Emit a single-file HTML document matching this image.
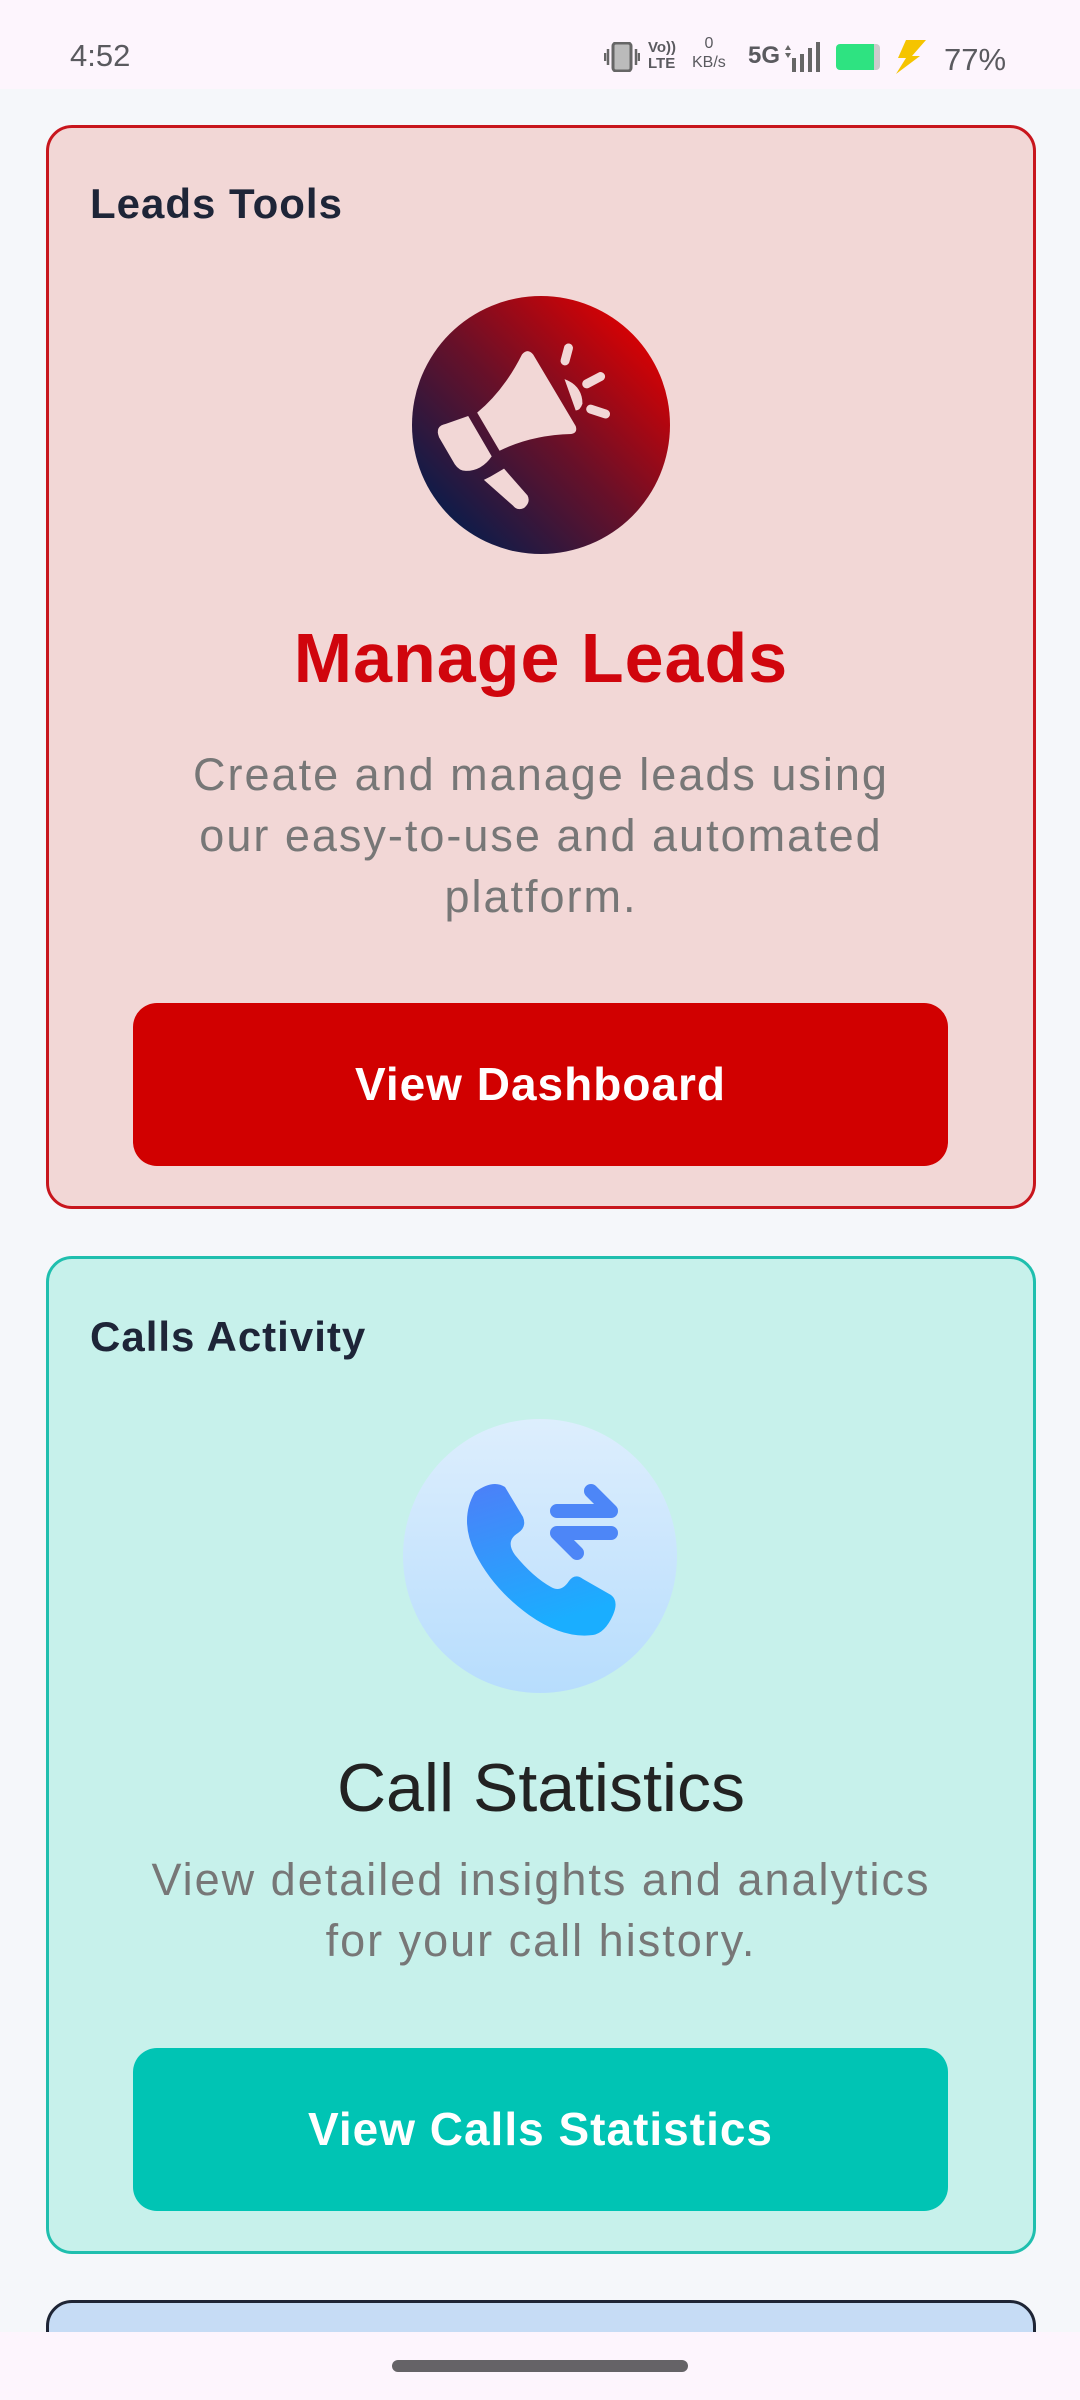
<!DOCTYPE html>
<html><head><meta charset="utf-8"><style>
*{margin:0;padding:0;box-sizing:border-box}
html,body{width:1080px;height:2400px;overflow:hidden}
body{background:#f5f7fa;font-family:"Liberation Sans",sans-serif;position:relative}
.sb{position:absolute;left:0;top:0;width:1080px;height:89px;background:#fdf5fd;color:#5a5a5f}
.card{position:absolute;left:46px;width:990px;border-radius:26px;border:3px solid;overflow:hidden}
.h{position:absolute;left:41px;font-size:42px;letter-spacing:1px;font-weight:bold;color:#1e2538}
.t{position:absolute;left:0;width:100%;text-align:center}
.d{position:absolute;left:0;width:100%;text-align:center;font-size:45px;letter-spacing:2px;line-height:61px;color:#777}
.btn{position:absolute;left:84px;width:815px;height:163px;border-radius:24px;color:#fff;font-size:46px;letter-spacing:1px;font-weight:bold;text-align:center;line-height:163px}
</style></head><body>
<div class="sb">
<div style="position:absolute;left:70px;top:38px;font-size:31px">4:52</div>
<svg style="position:absolute;left:604px;top:42px" width="36" height="30"><rect x="9" y="1" width="18" height="28" rx="3" fill="#bbb" stroke="#666" stroke-width="3"/><path d="M4 7 V23 M1 11 V19 M32 7 V23 M35 11 V19" stroke="#666" stroke-width="2.5"/></svg>
<div style="position:absolute;left:648px;top:40px;font-size:15px;font-weight:bold;line-height:16px">Vo))<br>LTE</div>
<div style="position:absolute;left:692px;top:34px;font-size:16px;line-height:19px;text-align:center">0<br>KB/s</div>
<div style="position:absolute;left:748px;top:42px;font-size:24px;font-weight:bold">5G</div>
<svg style="position:absolute;left:784px;top:42px" width="36" height="30"><rect x="8" y="16" width="4" height="14" fill="#666"/><rect x="16" y="12" width="4" height="18" fill="#666"/><rect x="24" y="6" width="4" height="24" fill="#666"/><rect x="32" y="0" width="4" height="30" fill="#666"/><path d="M1 8 L4 3 L7 8Z M1 11 L4 16 L7 11Z" fill="#666"/></svg>
<div style="position:absolute;left:836px;top:44px;width:44px;height:26px;background:#2ee381;border-radius:4px;border-right:6px solid #ccc"></div>
<svg style="position:absolute;left:892px;top:40px" width="36" height="34"><path d="M14 0 L34 0 L20 16 L28 16 L4 34 L14 18 L6 18Z" fill="#f5c400"/></svg>
<div style="position:absolute;left:944px;top:42px;font-size:31px">77%</div>
</div>

<div class="card" style="top:125px;height:1084px;background:#f2d7d6;border-color:#c8161d">
<div class="h" style="top:52px">Leads Tools</div>
<svg style="position:absolute;left:363px;top:168px" width="258" height="258" viewBox="0 0 258 258">
<defs><linearGradient id="g1" x1="0" y1="1" x2="1" y2="0"><stop offset="0.1" stop-color="#041d4d"/><stop offset="0.5" stop-color="#6a1028"/><stop offset="0.9" stop-color="#e00000"/></linearGradient></defs>
<circle cx="129" cy="129" r="129" fill="url(#g1)"/>
<g fill="#f2d7d6" transform="translate(129 129) scale(1.12) translate(-129 -129)">
<path d="M112 66 Q117 60 122 66 L160 130 Q162 136 156 137 Q120 138 92 152 L72 118 Q96 98 112 66Z"/>
<path d="M64 121 L85 157 Q76 170 62 170 Q56 170 52 164 L38 140 Q34 130 44 128Z"/>
<path d="M84 175 L96 168 L117 192 Q120 198 114 203 Q108 206 104 201 L78 178Z"/>
<path d="M150 88 Q166 94 166 110 Q164 116 160 116Z"/>
<rect x="148" y="56" width="8" height="20" rx="4" transform="rotate(15 152 66)"/>
<rect x="172" y="78" width="8" height="22" rx="4" transform="rotate(62 176 89)"/>
<rect x="176" y="106" width="8" height="22" rx="4" transform="rotate(108 180 117)"/>
</g></svg>
<div class="t" style="top:490px;font-size:70px;letter-spacing:1px;font-weight:bold;color:#d0050d">Manage Leads</div>
<div class="d" style="top:616px">Create and manage leads using<br>our easy-to-use and automated<br>platform.</div>
<div class="btn" style="top:875px;background:#d10000">View Dashboard</div>
</div>

<div class="card" style="top:1256px;height:998px;background:#c7f1eb;border-color:#1fbfae">
<div class="h" style="top:54px">Calls Activity</div>
<svg style="position:absolute;left:354px;top:160px" width="274" height="274" viewBox="0 0 274 274">
<defs><linearGradient id="g2" x1="0" y1="0" x2="0" y2="1"><stop offset="0" stop-color="#ddeefd"/><stop offset="1" stop-color="#b7ddfd"/></linearGradient>
<linearGradient id="g3" x1="0" y1="0" x2="0.3" y2="1"><stop offset="0" stop-color="#4d7ff8"/><stop offset="1" stop-color="#1aaeff"/></linearGradient></defs>
<circle cx="137" cy="137" r="137" fill="url(#g2)"/>
<path d="M72 73 Q90 60 102 68 L120 98 Q124 108 115 114 Q102 122 112 136 Q130 158 148 168 Q158 174 166 162 Q172 154 180 160 L208 176 Q216 182 210 196 Q202 214 190 216 Q160 220 126 196 Q90 170 72 134 Q56 100 72 73Z" fill="url(#g3)"/>
<g stroke="#4d86f7" stroke-width="14" stroke-linecap="round" stroke-linejoin="round" fill="none"><path d="M154 92 H208 L188 72"/><path d="M208 114 H154 L174 134"/></g>
</svg>
<div class="t" style="top:490px;font-size:68px;color:#222">Call Statistics</div>
<div class="d" style="top:590px">View detailed insights and analytics<br>for your call history.</div>
<div class="btn" style="top:789px;background:#00c4b4">View Calls Statistics</div>
</div>

<div class="card" style="top:2300px;height:100px;background:#c6dcf5;border-color:#1e2535"></div>
<div style="position:absolute;left:0;top:2332px;width:1080px;height:68px;background:#fdf5fd"></div>
<div style="position:absolute;left:392px;top:2360px;width:296px;height:12px;border-radius:6px;background:#656367"></div>
</body></html>
